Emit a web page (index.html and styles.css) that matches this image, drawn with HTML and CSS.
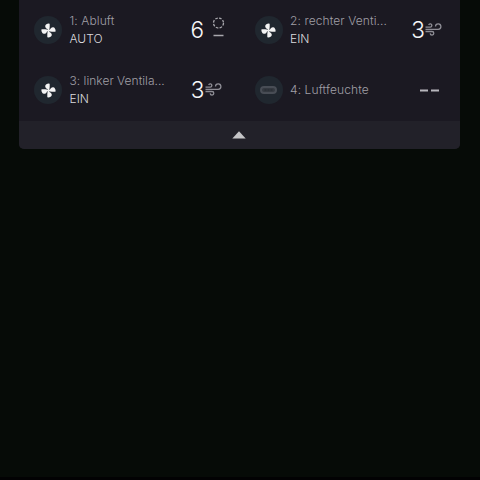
FILE: index.html
```
<!DOCTYPE html>
<html lang="de">
<head>
<meta charset="utf-8">
<title>Lüftung</title>
<link rel="stylesheet" href="styles.css">
</head>
<body>
<svg width="0" height="0" class="defs" aria-hidden="true">
  <defs>
    <symbol id="fan" viewBox="-7.5 -7.5 15 15">
      <path id="blade" d="M.2 -7.1C.9 -7.2 1.2 -6.9 1.2 -6.3V-3.4C1.2 -2.2 .8 -1.2 .6 0H-.6L-.9 -1.5C-2.2 -2 -3.4 -3 -3.3 -4.6C-3.2 -6.2 -1.4 -7 .2 -7.1Z"/>
      <use href="#blade" transform="rotate(90)"/>
      <use href="#blade" transform="rotate(180)"/>
      <use href="#blade" transform="rotate(270)"/>
    </symbol>
    <symbol id="wind" viewBox="0 0 17 13">
      <path d="M.5 4.1H5.2A1.6 1.6 0 1 0 3.7 2M.5 6.3H13.2A2.7 2.7 0 1 0 10.5 3.6M.5 8.5H7A1.8 1.8 0 1 1 5.2 10.4"/>
    </symbol>
  </defs>
</svg>
<main class="panel">
  <section class="grid">
    <article class="item">
      <span class="disc"><svg class="fan"><use href="#fan"/></svg></span>
      <div class="text"><p class="name">1: Abluft</p><p class="state">AUTO</p></div>
      <span class="value value-speed">6</span>
      <svg class="speed" viewBox="0 0 13 21"><circle cx="6.5" cy="6" r="5"/><path d="M1.5 18.5H11.5"/></svg>
    </article>
    <article class="item">
      <span class="disc"><svg class="fan"><use href="#fan"/></svg></span>
      <div class="text"><p class="name">2: rechter Venti...</p><p class="state">EIN</p></div>
      <span class="value">3</span>
      <svg class="wind"><use href="#wind"/></svg>
    </article>
    <article class="item">
      <span class="disc"><svg class="fan"><use href="#fan"/></svg></span>
      <div class="text"><p class="name name-tight">3: linker Ventila...</p><p class="state">EIN</p></div>
      <span class="value">3</span>
      <svg class="wind"><use href="#wind"/></svg>
    </article>
    <article class="item">
      <span class="disc"><svg class="sensor" viewBox="0 0 17 8"><rect x="1" y="1" width="15" height="6" rx="3"/><path d="M4.5 4H12.5"/></svg></span>
      <div class="text"><p class="name">4: Luftfeuchte</p></div>
      <svg class="dashes" viewBox="0 0 19 3"><path d="M0 1.5H8M11 1.5H19"/></svg>
    </article>
  </section>
  <footer class="toggle"><svg class="arrow" viewBox="0 0 14 8"><path d="M7 .3L13.7 7.4H.3Z"/></svg></footer>
</main>
</body>
</html>
```

FILE: styles.css
```
* { box-sizing: border-box; }
body {
  margin: 0;
  height: 480px;
  overflow: hidden;
  background: #060b07;
  border-bottom: 3px solid #020203;
  font-family: Inter, "Liberation Sans", sans-serif;
}
.defs { display: none; }
.panel {
  width: 441px;
  height: 149px;
  margin-left: 19px;
  border-radius: 0 0 5px 5px;
  overflow: hidden;
  background: #1b1922;
}
.grid {
  display: grid;
  grid-template-columns: 220.5px 220.5px;
  grid-template-rows: 60px 60px;
  padding-bottom: 1px;
}
.item {
  display: flex;
  align-items: center;
  padding: 0 18px 0 15px;
}
.disc {
  display: flex;
  align-items: center;
  justify-content: center;
  flex: none;
  width: 28px;
  height: 28px;
  border-radius: 50%;
  background: #20272f;
}
.fan { width: 15px; height: 15px; fill: #f4f4f4; }
.sensor { width: 17px; height: 8px; fill: #343940; stroke: #484d55; stroke-width: 2; }
.sensor path { stroke: #23282f; stroke-width: 1; stroke-dasharray: 2 1; }
.text { flex: 1; margin-left: 7.5px; white-space: nowrap; }
p { margin: 0; line-height: 18px; font-size: 12px; }
.name { color: #a09fa6; font-weight: 300; letter-spacing: .1px; }
.name-tight { letter-spacing: .02px; }
.state { color: #dad9de; font-weight: 300; }
.value { color: #f6f6f8; font-size: 22.5px; font-weight: 300; line-height: 28px; }
.value-speed { margin-right: 8px; }
.wind { width: 17px; height: 13px; margin-bottom: 1px; fill: none; stroke: #8e8d95; stroke-width: 1.3; }
.speed { width: 13px; height: 21px; margin: 0 -3.5px 5px 0; fill: none; stroke: #a8a7ad; stroke-width: 1.3; }
.speed circle { stroke-dasharray: 2.6 1.327; }
.speed path { stroke-width: 1.6; }
.dashes { width: 19px; height: 3px; margin-right: 3px; fill: none; stroke: #b7b6bc; stroke-width: 1.8; }
.toggle {
  display: flex;
  align-items: center;
  justify-content: center;
  height: 28px;
  padding-right: 1px;
  background: #222129;
}
.arrow { width: 14px; height: 8px; fill: #c5c5c7; }
```
